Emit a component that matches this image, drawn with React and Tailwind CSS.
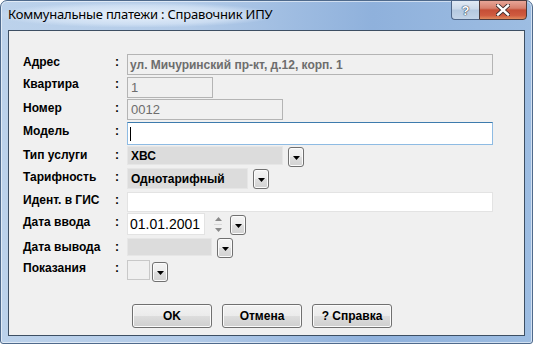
import React from "react";

function DropBtn({ cls = "" }) {
  return (
    <div className={"w-[16px] h-[20px] rounded-[3px] border border-[#707070] bg-[linear-gradient(#f4f4f4_0%,#ececec_50%,#dedede_50%,#d2d2d2_100%)] shadow-[inset_0_0_0_1px_#fbfbfb] flex items-center justify-center " + cls}>
      <svg width="7" height="4" viewBox="0 0 7 4" className="mt-[1px]">
        <path d="M0 0H7L3.5 4Z" fill="#000" />
      </svg>
    </div>
  );
}

function Label({ children, mt = "mt-[1px]" }) {
  return (
    <>
      <div className={"w-[92px] shrink-0 text-[12px] font-bold leading-[14px] text-black whitespace-nowrap " + mt}>{children}</div>
      <div className={"w-[12px] shrink-0 text-[12px] font-bold leading-[14px] text-black " + mt}>:</div>
    </>
  );
}

function Btn({ children }) {
  return (
    <div className="w-[80px] h-[24px] rounded-[3px] border border-[#707070] bg-[linear-gradient(#f2f2f2_0%,#ebebeb_50%,#dddddd_50%,#cfcfcf_100%)] shadow-[inset_0_0_0_1px_#fbfbfb] flex items-center justify-center text-[12px] font-bold text-black">
      {children}
    </div>
  );
}

export default function App() {
  return (
    <div className="w-[533px] h-[344px] font-['Liberation_Sans',Arial,sans-serif]">
      <div className="w-full h-full rounded-t-[7px] rounded-b-[3px] border border-[#4f6a8c] bg-[linear-gradient(90deg,#bcd2eb_0%,#b3cbe8_35%,#8fb1dc_70%,#9dbde2_100%)] shadow-[inset_0_0_0_1px_rgba(255,255,255,0.55)] flex flex-col px-[7px] pb-[7px]">
        {/* title bar */}
        <div className="h-[29px] shrink-0 flex items-start relative">
          <div className="absolute left-[-6px] top-[2px] w-[270px] h-[24px] rounded-full bg-[radial-gradient(ellipse_at_center,rgba(235,243,252,0.95)_0%,rgba(220,233,248,0.6)_55%,rgba(200,220,242,0)_75%)]" />
          <div className="relative mt-[5px] text-[13px] leading-[16px] text-black font-['Noto_Sans',sans-serif] tracking-[-0.2px]">
            Коммунальные платежи : Справочник ИПУ
          </div>
          <div className="ml-auto relative flex mt-[-1px] mr-[-2px]">
            <div className="w-[28px] h-[20px] rounded-bl-[4px] border border-[#4e6688] border-r-0 bg-[linear-gradient(#e1eaf5_0%,#cbd9ea_45%,#b4c8df_50%,#c3d4e8_100%)] flex items-center justify-center">
              <span className="text-[13px] font-bold text-white leading-none [text-shadow:0_0_1px_#2b3d55,0_0_1px_#2b3d55,0_0_1px_#2b3d55]">?</span>
            </div>
            <div className="w-[48px] h-[20px] rounded-br-[4px] border border-[#4e3a3a] bg-[linear-gradient(#e7a597_0%,#d7806d_40%,#c54e36_50%,#cf5b3f_80%,#e08a5d_100%)] flex items-center justify-center">
              <svg width="14" height="12" viewBox="0 0 14 12">
                <path d="M2 1.5L12 10.5M12 1.5L2 10.5" stroke="#3a2a2a" strokeWidth="4.2" strokeLinecap="square" />
                <path d="M2 1.5L12 10.5M12 1.5L2 10.5" stroke="#fff" strokeWidth="2.4" strokeLinecap="square" />
              </svg>
            </div>
          </div>
        </div>
        {/* client */}
        <div className="flex-1 border border-[#3d4f63] bg-[#f0f0f0] pl-[14px] pt-[23px] flex flex-col">
          {/* Адрес */}
          <div className="h-[23px] flex items-start">
            <Label>Адрес</Label>
            <div className="w-[366px] h-[21px] border border-[#b4b4b4] bg-[#f0f0f0] flex items-center pl-[2px] text-[12px] font-bold text-[#6d6d6d] whitespace-nowrap">ул. Мичуринский пр-кт, д.12, корп. 1</div>
          </div>
          {/* Квартира */}
          <div className="h-[22px] flex items-start">
            <Label mt="mt-0">Квартира</Label>
            <div className="w-[86px] h-[21px] border border-[#b4b4b4] bg-[#f0f0f0] flex items-center pl-[3px] text-[13px] text-[#6d6d6d]">1</div>
          </div>
          {/* Номер */}
          <div className="h-[23px] flex items-start">
            <Label mt="mt-[2px]">Номер</Label>
            <div className="w-[156px] h-[21px] border border-[#b4b4b4] bg-[#f0f0f0] flex items-center pl-[3px] text-[13px] text-[#6d6d6d]">0012</div>
          </div>
          {/* Модель */}
          <div className="h-[24px] flex items-start">
            <Label mt="mt-[2px]">Модель</Label>
            <div className="w-[366px] h-[23px] border border-[#8ebbe3] border-t-[#3d7bad] bg-white flex items-center pl-[2px]">
              <div className="w-[1px] h-[14px] bg-black" />
            </div>
          </div>
          {/* Тип услуги */}
          <div className="h-[22px] flex items-start">
            <Label mt="mt-[2px]">Тип услуги</Label>
            <div className="w-[156px] h-[19px] border border-[#e6e6e6] bg-[#dcdcdc] flex items-center pl-[3px] text-[12px] font-bold text-black">ХВС</div>
            <DropBtn cls="ml-[5px] mt-[1px]" />
          </div>
          {/* Тарифность */}
          <div className="h-[24px] flex items-start">
            <Label mt="mt-[2px]">Тарифность</Label>
            <div className="w-[121px] h-[21px] border border-[#e6e6e6] bg-[#dcdcdc] flex items-center pl-[3px] text-[12px] font-bold text-black">Однотарифный</div>
            <DropBtn cls="ml-[5px] mt-[1px]" />
          </div>
          {/* Идент. в ГИС */}
          <div className="h-[21px] flex items-start">
            <Label mt="mt-[1px]">Идент. в ГИС</Label>
            <div className="w-[366px] h-[20px] border border-[#e3e3e3] bg-white" />
          </div>
          {/* Дата ввода */}
          <div className="h-[25px] flex items-start">
            <Label mt="mt-[2px]">Дата ввода</Label>
            <div className="w-[78px] h-[22px] border border-[#e3e3e3] bg-white flex items-center pl-[2px] text-[14px] text-black">01.01.2001</div>
            <div className="w-[24px] h-[22px] flex flex-col items-center justify-center gap-[3px] ml-[1px]">
              <svg width="7" height="4" viewBox="0 0 7 4"><path d="M0 4H7L3.5 0Z" fill="#8a8a8a" /></svg>
              <div className="w-[8px] h-[1px] bg-[#d8d8d8]" />
              <svg width="7" height="4" viewBox="0 0 7 4"><path d="M0 0H7L3.5 4Z" fill="#8a8a8a" /></svg>
            </div>
            <DropBtn cls="mt-[2px]" />
          </div>
          {/* Дата вывода */}
          <div className="h-[22px] flex items-start">
            <Label mt="mt-[2px]">Дата вывода</Label>
            <div className="w-[85px] h-[18px] border border-[#e6e6e6] bg-[#dcdcdc]" />
            <DropBtn cls="ml-[5px]" />
          </div>
          {/* Показания */}
          <div className="h-[20px] flex items-start">
            <Label mt="mt-[1px]">Показания</Label>
            <div className="w-[23px] h-[20px] border border-[#c8c8c8] bg-[#f0f0f0]" />
            <DropBtn cls="ml-[2px] mt-[2px] h-[18px]" />
          </div>
          {/* buttons */}
          <div className="flex gap-[10px] mt-[24px] pl-[109px]">
            <Btn>OK</Btn>
            <Btn>Отмена</Btn>
            <Btn>? Справка</Btn>
          </div>
        </div>
      </div>
    </div>
  );
}
